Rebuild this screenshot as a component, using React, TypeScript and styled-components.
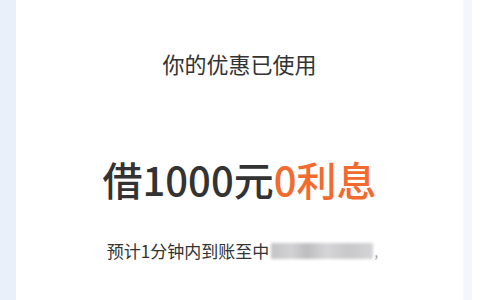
import * as React from 'react';
import styled, { createGlobalStyle } from 'styled-components';

const GlobalStyle = createGlobalStyle`
    html, body {
        margin: 0;
        padding: 0;
        background: #ffffff;
    }
    * {
        box-sizing: border-box;
    }
`;

const Page = styled.div`
    display: flex;
    width: 480px;
    height: 300px;
    overflow: hidden;
    font-family: "Noto Sans CJK SC", "Noto Sans", sans-serif;
`;

const Gutter = styled.div<{ $w: number; $bg: string }>`
    width: ${(p) => p.$w}px;
    flex-shrink: 0;
    background: ${(p) => p.$bg};
`;

const Card = styled.div`
    flex: 1;
    background: #ffffff;
    display: flex;
    flex-direction: column;
    align-items: center;
`;

const Title = styled.div`
    margin-top: 47px;
    font-size: 22px;
    line-height: 32px;
    color: #333333;
`;

const Headline = styled.div`
    margin-top: 74px;
    font-size: 40px;
    line-height: 52px;
    font-weight: 500;
    color: #333333;
    display: flex;
    align-items: baseline;
`;

const Accent = styled.span`
    color: #f26a2e;
`;

const Note = styled.div`
    margin-left: 6px;
    margin-top: 34px;
    font-size: 17px;
    line-height: 24px;
    color: #333333;
    display: flex;
    align-items: center;
`;

const Masked = styled.span`
    display: inline-block;
    width: 102px;
    height: 16px;
    margin-left: 2px;
    background: linear-gradient(90deg, #c4c4c6 0%, #d2d2d4 20%, #bdbdbf 35%, #d6d6d8 55%, #c8c8ca 75%, #d4d4d6 100%);
    filter: blur(1.5px);
`;

const Comma = styled.span`
    color: #999999;
    font-size: 14px;
    margin-left: 1px;
`;

export default function App() {
    return (
        <>
            <GlobalStyle />
            <Page>
                <Gutter $w={16} $bg="#e9f0fa" />
                <Card>
                    <Title>你的优惠已使用</Title>
                    <Headline>
                        借1000元<Accent>0利息</Accent>
                    </Headline>
                    <Note>
                        预计1分钟内到账至中
                        <Masked />
                        <Comma>,</Comma>
                    </Note>
                </Card>
                <Gutter $w={9} $bg="#f3f6fc" />
                <Gutter $w={8} $bg="#ffffff" />
            </Page>
        </>
    );
}
